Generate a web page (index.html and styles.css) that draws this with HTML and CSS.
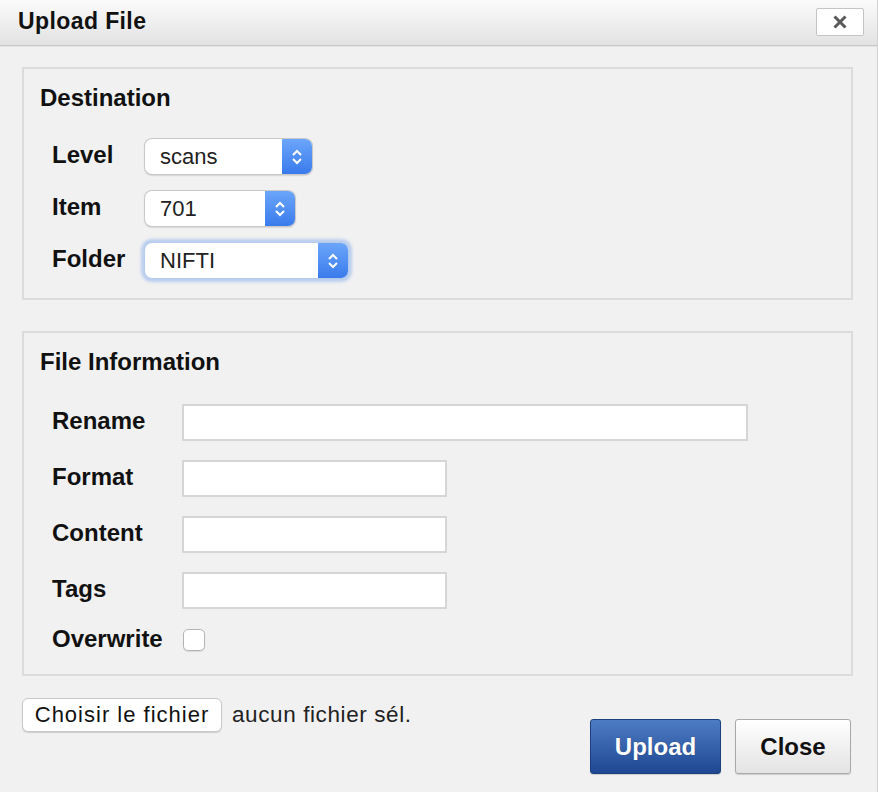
FILE: index.html
```html
<!DOCTYPE html>
<html>
<head>
<meta charset="utf-8">
<link rel="stylesheet" href="styles.css">
</head>
<body>
<div class="dialog">
  <div class="titlebar">
    <span class="title">Upload File</span>
    <button class="x-btn" aria-label="close">
      <svg width="16" height="16" viewBox="0 0 16 16"><path d="M2.5 2.5 L13.5 13.5 M13.5 2.5 L2.5 13.5" stroke="#5a5a5a" stroke-width="3" stroke-linecap="butt"/></svg>
    </button>
  </div>
  <div class="content">
    <div class="panel dest">
      <div class="heading">Destination</div>
      <div class="rows">
        <div class="label">Level</div>
        <div class="select w-level"><span class="val">scans</span><span class="arrow"><svg width="14" height="20" viewBox="0 0 14 20"><path d="M3 8 L7 4 L11 8 M3 12 L7 16 L11 12" fill="none" stroke="#fff" stroke-width="2"/></svg></span></div>
        <div class="label">Item</div>
        <div class="select w-item"><span class="val">701</span><span class="arrow"><svg width="14" height="20" viewBox="0 0 14 20"><path d="M3 8 L7 4 L11 8 M3 12 L7 16 L11 12" fill="none" stroke="#fff" stroke-width="2"/></svg></span></div>
        <div class="label">Folder</div>
        <div class="select w-folder focus"><span class="val">NIFTI</span><span class="arrow"><svg width="14" height="20" viewBox="0 0 14 20"><path d="M3 8 L7 4 L11 8 M3 12 L7 16 L11 12" fill="none" stroke="#fff" stroke-width="2"/></svg></span></div>
      </div>
    </div>
    <div class="panel info">
      <div class="heading">File Information</div>
      <div class="rows info-rows">
        <div class="label">Rename</div>
        <div class="input wide"></div>
        <div class="label">Format</div>
        <div class="input"></div>
        <div class="label">Content</div>
        <div class="input"></div>
        <div class="label">Tags</div>
        <div class="input"></div>
        <div class="label">Overwrite</div>
        <div class="check-cell"><span class="check"></span></div>
      </div>
    </div>
    <div class="footer">
      <div class="file">
        <span class="file-btn">Choisir le fichier</span>
        <span class="file-text">aucun fichier sél.</span>
      </div>
      <div class="actions">
        <span class="btn primary">Upload</span>
        <span class="btn">Close</span>
      </div>
    </div>
  </div>
</div>
</body>
</html>
```

FILE: styles.css
```css
html, body {
  margin: 0;
  padding: 0;
}
body {
  background: #f1f1f1;
  font-family: "Liberation Sans", Arial, sans-serif;
  color: #111;
  width: 878px;
  height: 792px;
  overflow: hidden;
}
.dialog {
  width: 877px;
  height: 792px;
  border-right: 1px solid #d2d2d2;
  background: #f1f1f1;
}
.titlebar {
  height: 45px;
  display: flex;
  align-items: center;
  justify-content: space-between;
  padding: 0 13px 0 18px;
  background: linear-gradient(#fbfbfb, #e2e2e2);
  border-bottom: 1px solid #c8c8c8;
  box-shadow: 0 1px 0 #e4e4e4;
}
.title {
  font-weight: bold;
  font-size: 23px;
  letter-spacing: 0.4px;
  color: #111;
  margin-top: -2px;
}
.x-btn {
  width: 48px;
  height: 28px;
  margin-top: -2px;
  background: #fff;
  border: 1px solid #c4c4c4;
  border-radius: 2px;
  display: flex;
  align-items: center;
  justify-content: center;
  padding: 0;
}
.content {
  padding: 21px 24px 0 22px;
}
.panel {
  border: 2px solid #dcdcdc;
  padding: 14px 16px 0 16px;
}
.dest {
  height: 233px;
  box-sizing: border-box;
}
.info {
  margin-top: 31px;
  height: 345px;
  box-sizing: border-box;
}
.heading {
  font-weight: bold;
  font-size: 24px;
  line-height: 30px;
}
.rows {
  display: grid;
  grid-template-columns: 93px auto;
  justify-items: start;
  align-items: center;
  row-gap: 17px;
  margin-top: 26px;
  padding-left: 12px;
}
.label {
  font-weight: bold;
  font-size: 24px;
  margin-top: -3px;
}
.select {
  height: 35px;
  box-sizing: border-box;
  display: flex;
  align-items: stretch;
  border-radius: 7px;
  background: #fff;
  box-shadow: 0 0 0 1px #c9c9c9, 0 1px 2px rgba(0,0,0,0.35);
  overflow: hidden;
}
.select .val {
  flex: 1;
  padding-left: 15px;
  font-size: 22px;
  line-height: 36px;
  color: #222;
}
.select .arrow {
  width: 30px;
  background: linear-gradient(#6ba6fa, #3a7bec);
  display: flex;
  align-items: center;
  justify-content: center;
}
.w-level { width: 167px; }
.w-item { width: 150px; }
.w-folder { width: 203px; }
.select.focus {
  box-shadow: 0 0 0 1px #b5cbee, 0 0 3px 4px rgba(120,165,235,0.45);
}
.info-rows {
  grid-template-columns: 130px auto;
  row-gap: 19px;
  margin-top: 27px;
}
.input {
  width: 265px;
  height: 37px;
  box-sizing: border-box;
  background: #fff;
  border: 2px solid #d6d6d6;
}
.input.wide {
  width: 566px;
}
.check-cell {
  height: 22px;
  margin-top: -1px;
}
.check {
  display: block;
  width: 22px;
  height: 22px;
  box-sizing: border-box;
  border: 1px solid #b4b4b4;
  border-radius: 5px;
  background: #fff;
  box-shadow: 0 1px 1px rgba(0,0,0,0.1);
  margin-left: 1px;
}
.footer {
  display: flex;
  justify-content: space-between;
  align-items: flex-start;
  margin-top: 22px;
}
.file {
  display: flex;
  align-items: center;
  gap: 10px;
}
.file-btn {
  width: 200px;
  height: 34px;
  box-sizing: border-box;
  background: #fff;
  border: 1px solid #c9c9c9;
  border-radius: 6px;
  box-shadow: 0 1px 1px rgba(0,0,0,0.15);
  font-size: 22px;
  letter-spacing: 1px;
  display: flex;
  align-items: center;
  justify-content: center;
  color: #111;
}
.file-text {
  font-size: 22.5px;
  letter-spacing: 0.6px;
  color: #222;
  margin-top: -1px;
}
.actions {
  display: flex;
  gap: 14px;
  margin-top: 21px;
  margin-right: 2px;
}
.btn {
  width: 116px;
  height: 55px;
  box-sizing: border-box;
  border: 1px solid #a9a9a9;
  border-radius: 3px;
  background: linear-gradient(#ffffff, #e3e3e3);
  font-weight: bold;
  font-size: 24px;
  display: flex;
  align-items: center;
  justify-content: center;
  color: #111;
  box-shadow: 0 1px 1px rgba(0,0,0,0.15);
}
.btn.primary {
  width: 131px;
  color: #fff;
  border-color: #1c3f7e;
  background: linear-gradient(#4d7cc4, #1f4792);
  text-shadow: 0 0 1px rgba(0,0,0,0.3);
}
```
